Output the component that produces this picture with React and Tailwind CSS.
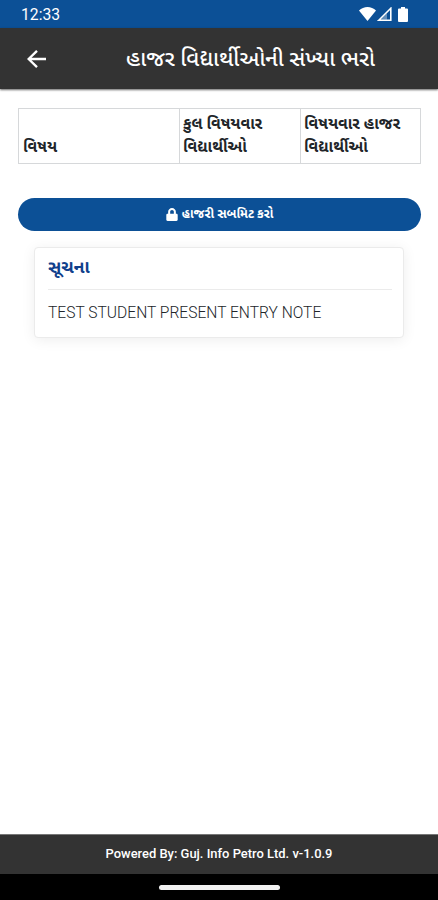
import { FaLock } from 'react-icons/fa'

const StatusBar = () => {
  return (
    <div className="h-7 shrink-0 bg-[#0c5096] text-white flex items-center justify-between pl-[21px] pr-[30px]">
      <span className="text-[15.7px] leading-none pt-[1px]">12:33</span>
      <div className="flex items-center">
        <svg className="w-[17px] h-[14px]" viewBox="0 0 17 14" fill="currentColor">
          <path d="M8.5 14 0 3.6C2.4 1.3 5.3 0 8.5 0S14.6 1.3 17 3.6Z" />
        </svg>
        <svg className="w-[15px] h-[14px] ml-[1px]" viewBox="0 0 15 14" fill="none" stroke="currentColor" strokeWidth="1.6">
          <path d="M1.8 13.2 13.8 1.3v11.9Z" />
          <path d="M3.5 12.8 10 6.3v6.5Z" fill="currentColor" fillOpacity="0.35" stroke="none" />
        </svg>
        <svg className="w-[10px] h-[15px] ml-[6px]" viewBox="0 0 10 15" fill="currentColor">
          <path d="M3 0h4v1.5h2a1 1 0 0 1 1 1V14a1 1 0 0 1-1 1H1a1 1 0 0 1-1-1V2.5a1 1 0 0 1 1-1h2Z" />
        </svg>
      </div>
    </div>
  )
}

const Header = () => {
  return (
    <header className="h-[61px] shrink-0 bg-[#333333] text-white flex items-center shadow-[0_1px_2px_rgba(0,0,0,0.6)]">
      <button className="ml-[27px] w-[19px] h-[18px]">
        <svg className="w-[19px] h-[18px]" viewBox="0 0 19 18" fill="none" stroke="currentColor" strokeWidth="2.4">
          <path d="M10 .9 1.6 9l8.4 8.1M1.6 9H19" />
        </svg>
      </button>
      <h1 className="ml-[80px] text-[22.1px] font-medium whitespace-nowrap">હાજર વિદ્યાર્થીઓની સંખ્યા ભરો</h1>
    </header>
  )
}

const SubjectTable = () => {
  return (
    <table className="w-[402px] mt-[19px] ml-[18px] table-fixed border-collapse text-[15.7px] leading-[23px] font-bold text-[#212529]">
      <thead>
        <tr className="h-[55px] text-left">
          <th className="w-[161px] border border-[#d6d8da] px-1 pb-[5px] align-bottom">વિષય</th>
          <th className="w-[121px] border border-[#d6d8da] pl-[3px] pb-[5px] align-bottom whitespace-nowrap">કુલ વિષયવાર<br />વિદ્યાર્થીઓ</th>
          <th className="w-[120px] border border-[#d6d8da] pl-[3px] pb-[5px] align-bottom whitespace-nowrap">વિષયવાર હાજર<br />વિદ્યાર્થીઓ</th>
        </tr>
      </thead>
    </table>
  )
}

const NoteCard = () => {
  return (
    <div className="mt-[16px] mx-[34px] h-[91px] bg-white border border-[#ebebeb] rounded-[4px] pr-[11px] pl-[13px] shadow-[0_2px_14px_rgba(0,0,0,0.07)]">
      <h2 className="h-[42px] border-b border-[#ebebeb] text-[17.6px] leading-[39px] font-bold text-[#10408c]">સૂચના</h2>
      <p className="pt-[11px] text-[15.6px] leading-[24px] font-light text-[#212529] whitespace-nowrap">TEST STUDENT PRESENT ENTRY NOTE</p>
    </div>
  )
}

const Footer = () => {
  return (
    <footer className="shrink-0">
      <div className="h-[40px] pb-[1px] bg-[#333333] border-t border-[#777777] text-white text-[12.95px] font-medium flex items-center justify-center">
        Powered By: Guj. Info Petro Ltd. v-1.0.9
      </div>
      <div className="h-[26px] bg-black flex items-center justify-center">
        <div className="w-[121px] h-[5px] rounded-full bg-[#f2f2f2]" />
      </div>
    </footer>
  )
}

const App = () => {
  return (
    <div className="w-full h-screen bg-white flex flex-col overflow-hidden font-[Roboto,'Noto_Sans_Gujarati','Noto_Sans',sans-serif]">
      <StatusBar />
      <Header />
      <main className="flex-1">
        <SubjectTable />
        <button className="mt-[34px] ml-[18px] w-[403px] h-[33px] rounded-full bg-[#0c5096] text-white text-[12.4px] font-bold flex items-center justify-center gap-1">
          <FaLock className="w-[12px] h-[13px]" />
          <span className="whitespace-nowrap">હાજરી સબમિટ કરો</span>
        </button>
        <NoteCard />
      </main>
      <Footer />
    </div>
  )
}

export default App
